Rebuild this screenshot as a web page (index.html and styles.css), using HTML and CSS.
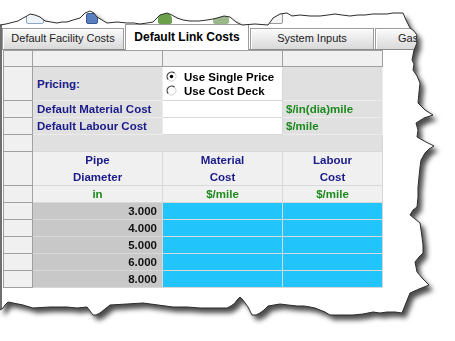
FILE: index.html
```html
<!DOCTYPE html>
<html lang="en">
<head>
    <meta charset="UTF-8">
    <title>Default Link Costs</title>
    <link rel="stylesheet" href="styles.css">
</head>
<body>
    <div class="stage">
        <div class="paper">
            <div class="sheet">
                <div class="toolbar">
                    <span class="ico doc"></span>
                    <span class="ico save"></span>
                    <span class="ico leaf"></span>
                    <span class="ico leaf2"></span>
                    <span class="ico outline"></span>
                </div>
                <div class="window">
                    <div class="tabs">
                        <div class="tab first">Default Facility Costs</div>
                        <div class="tab active">Default Link Costs</div>
                        <div class="tab">System Inputs</div>
                        <div class="tab last">Gas</div>
                    </div>
                    <div class="panel">
                        <div class="grid">
                            <div class="row h16">
                                <div class="rh"></div>
                                <div class="c c1 ch"></div>
                                <div class="c c2 ch"></div>
                                <div class="c c3 ch"></div>
                            </div>
                            <div class="row h34">
                                <div class="rh"></div>
                                <div class="c c1 lbl">Pricing:</div>
                                <div class="c c2 input radios">
                                    <label class="radio">
                                        <svg width="11" height="11" viewBox="0 0 11 11"><circle cx="5.5" cy="5.5" r="4.5" fill="#fff"/><path d="M2.32 8.68A4.5 4.5 0 0 1 8.68 2.32" stroke="#3a3a3a" stroke-width="1.2" fill="none"/><path d="M8.68 2.32A4.5 4.5 0 0 1 2.32 8.68" stroke="#d0d0d0" fill="none"/><circle cx="5.5" cy="5.5" r="1.8" fill="#000"/></svg>
                                        Use Single Price
                                    </label>
                                    <label class="radio">
                                        <svg width="11" height="11" viewBox="0 0 11 11"><circle cx="5.5" cy="5.5" r="4.5" fill="#fff"/><path d="M2.32 8.68A4.5 4.5 0 0 1 8.68 2.32" stroke="#3a3a3a" stroke-width="1.2" fill="none"/><path d="M8.68 2.32A4.5 4.5 0 0 1 2.32 8.68" stroke="#d0d0d0" fill="none"/></svg>
                                        Use Cost Deck
                                    </label>
                                </div>
                                <div class="c c3 unit"></div>
                            </div>
                            <div class="row h17">
                                <div class="rh"></div>
                                <div class="c c1 lbl">Default Material Cost</div>
                                <div class="c c2 input"></div>
                                <div class="c c3 unit">$/in(dia)mile</div>
                            </div>
                            <div class="row h17">
                                <div class="rh"></div>
                                <div class="c c1 lbl">Default Labour Cost</div>
                                <div class="c c2 input"></div>
                                <div class="c c3 unit">$/mile</div>
                            </div>
                            <div class="row h17">
                                <div class="rh"></div>
                                <div class="c span"></div>
                            </div>
                            <div class="row h34">
                                <div class="rh"></div>
                                <div class="c c1 hd"><span>Pipe</span><span>Diameter</span></div>
                                <div class="c c2 hd"><span>Material</span><span>Cost</span></div>
                                <div class="c c3 hd"><span>Labour</span><span>Cost</span></div>
                            </div>
                            <div class="row h17">
                                <div class="rh"></div>
                                <div class="c c1 un">in</div>
                                <div class="c c2 un">$/mile</div>
                                <div class="c c3 un">$/mile</div>
                            </div>
                            <div class="row h17">
                                <div class="rh"></div>
                                <div class="c c1 num">3.000</div>
                                <div class="c c2 cy"></div>
                                <div class="c c3 cy"></div>
                            </div>
                            <div class="row h17">
                                <div class="rh"></div>
                                <div class="c c1 num">4.000</div>
                                <div class="c c2 cy"></div>
                                <div class="c c3 cy"></div>
                            </div>
                            <div class="row h17">
                                <div class="rh"></div>
                                <div class="c c1 num">5.000</div>
                                <div class="c c2 cy"></div>
                                <div class="c c3 cy"></div>
                            </div>
                            <div class="row h17">
                                <div class="rh"></div>
                                <div class="c c1 num">6.000</div>
                                <div class="c c2 cy"></div>
                                <div class="c c3 cy"></div>
                            </div>
                            <div class="row h17">
                                <div class="rh"></div>
                                <div class="c c1 num">8.000</div>
                                <div class="c c2 cy"></div>
                                <div class="c c3 cy"></div>
                            </div>
                        </div>
                    </div>
                </div>
            </div>
        </div>
        <!-- torn paper outline -->
        <svg class="edge" width="455" height="341" viewBox="0 0 455 341">
            <polyline fill="none" stroke="#2b2b2b" stroke-width="1" points="0,25 6,24 10,23 14,22 18,21 23,18 27,16 30,14 35,15 40,17 45,21 51,22 57,23 62,22 67,22 73,20 80,18 83,15 85,13 90,11 94,13 97,17 102,20 107,23 117,22 127,23 134,23 140,24 147,23 153,22 157,18 160,15 167,13 172,15 177,18 183,20 190,21 199,21 207,20 213,19 217,18 224,16 230,17 236,22 242,25 255,24 268,25 271,21 273,18 280,14 287,13 292,16 300,15 310,16 320,16 328,15 335,14 342,15 350,16 358,15 365,15 373,14 380,14 387,14 393,13 403,13 406,20 410,28 414,31 417,35 416,40 417,43 414,50 412,60 414,64 413,70 417,76 420,83 419,92 418,103 425,110 433,115 424,118 416,123 418,130 417,137 426,142 434,146 429,149 425,153 421,160 420,167 419,177 418,187 418,197 417,207 413,210 410,215 415,219 420,223 421,230 422,237 423,245 423,253 419,257 415,262 416,267 417,272 423,279 429,285 419,289 410,293 406,303 402,313 395,312 387,312 380,313 373,312 363,314 353,315 342,315 330,315 325,312 320,310 315,308 310,307 304,306 297,306 288,305 280,304 274,305 268,306 264,310 260,313 256,315 252,315 248,307 243,300 240,297 237,300 235,303 231,306 227,308 213,308 200,308 187,307 173,307 158,305 143,303 127,304 110,305 105,309 100,313 96,315 93,315 90,311 87,307 77,308 67,307 50,307 33,308 23,305 13,303 8,302 5,305 3,308 0,310"/>
        </svg>
    </div>
</body>
</html>
```

FILE: styles.css
```css
* { margin: 0; padding: 0; box-sizing: border-box; }
body { background: #fff; font-family: "Liberation Sans", Arial, sans-serif; overflow: hidden; }

.stage { position: relative; width: 455px; height: 341px; }
.paper { filter: drop-shadow(4px 5px 2.5px rgba(0, 0, 0, 0.7)); }
.sheet {
    width: 455px; height: 341px; background: #fff; padding-top: 10px;
    clip-path: polygon(0 25px, 6px 24px, 10px 23px, 14px 22px, 18px 21px, 23px 18px, 27px 16px, 30px 14px, 35px 15px, 40px 17px, 45px 21px, 51px 22px, 57px 23px, 62px 22px, 67px 22px, 73px 20px, 80px 18px, 83px 15px, 85px 13px, 90px 11px, 94px 13px, 97px 17px, 102px 20px, 107px 23px, 117px 22px, 127px 23px, 134px 23px, 140px 24px, 147px 23px, 153px 22px, 157px 18px, 160px 15px, 167px 13px, 172px 15px, 177px 18px, 183px 20px, 190px 21px, 199px 21px, 207px 20px, 213px 19px, 217px 18px, 224px 16px, 230px 17px, 236px 22px, 242px 25px, 255px 24px, 268px 25px, 271px 21px, 273px 18px, 280px 14px, 287px 13px, 292px 16px, 300px 15px, 310px 16px, 320px 16px, 328px 15px, 335px 14px, 342px 15px, 350px 16px, 358px 15px, 365px 15px, 373px 14px, 380px 14px, 387px 14px, 393px 13px, 403px 13px, 406px 20px, 410px 28px, 414px 31px, 417px 35px, 416px 40px, 417px 43px, 414px 50px, 412px 60px, 414px 64px, 413px 70px, 417px 76px, 420px 83px, 419px 92px, 418px 103px, 425px 110px, 433px 115px, 424px 118px, 416px 123px, 418px 130px, 417px 137px, 426px 142px, 434px 146px, 429px 149px, 425px 153px, 421px 160px, 420px 167px, 419px 177px, 418px 187px, 418px 197px, 417px 207px, 413px 210px, 410px 215px, 415px 219px, 420px 223px, 421px 230px, 422px 237px, 423px 245px, 423px 253px, 419px 257px, 415px 262px, 416px 267px, 417px 272px, 423px 279px, 429px 285px, 419px 289px, 410px 293px, 406px 303px, 402px 313px, 395px 312px, 387px 312px, 380px 313px, 373px 312px, 363px 314px, 353px 315px, 342px 315px, 330px 315px, 325px 312px, 320px 310px, 315px 308px, 310px 307px, 304px 306px, 297px 306px, 288px 305px, 280px 304px, 274px 305px, 268px 306px, 264px 310px, 260px 313px, 256px 315px, 252px 315px, 248px 307px, 243px 300px, 240px 297px, 237px 300px, 235px 303px, 231px 306px, 227px 308px, 213px 308px, 200px 308px, 187px 307px, 173px 307px, 158px 305px, 143px 303px, 127px 304px, 110px 305px, 105px 309px, 100px 313px, 96px 315px, 93px 315px, 90px 311px, 87px 307px, 77px 308px, 67px 307px, 50px 307px, 33px 308px, 23px 305px, 13px 303px, 8px 302px, 5px 305px, 3px 308px, 0 310px);
}
.edge { position: absolute; top: 0; left: 0; }

/* tops of toolbar icons peeking above the tear */
.toolbar { display: flex; align-items: flex-end; height: 14px; }
.ico { display: block; height: 11px; border-radius: 2px; }
.doc { width: 18px; margin-left: 26px; border: 1px solid #8fa6c4; background: #eef3fa; }
.save { width: 12px; margin-left: 42px; background: #5a7fc0; border: 1px solid #3b5a94; }
.leaf { width: 14px; margin-left: 60px; background: #6aa04a; border-radius: 6px 6px 2px 2px; }
.leaf2 { width: 16px; margin-left: 41px; background: #9ab88a; border-radius: 6px 6px 2px 2px; }
.outline { width: 16px; margin-left: 38px; border: 1px solid #9a9a9a; background: #f4f4f4; }

.window { border-left: 2px solid #6f6f6f; height: 300px; }

.tabs { display: flex; align-items: flex-end; height: 26px; border-bottom: 1px solid #8c8c8c; }
.tab { width: 124px; height: 21px; margin-right: 1px; flex-shrink: 0; border: 1px solid #9c9c9c; border-bottom: none; background: linear-gradient(#fbfbfb, #d9d9d9); box-shadow: inset 1px 1px 0 #fff; font-size: 11px; line-height: 19px; color: #222; text-align: center; white-space: nowrap; }
.tab.first { width: 122px; }
.tab.last { width: 60px; margin-right: 0; text-align: left; padding-left: 22px; }
.tab.active { height: 26px; margin-bottom: -1px; background: #fff; box-shadow: none; font-size: 12px; font-weight: bold; line-height: 25px; color: #000; }

.panel { padding-left: 1px; background: #fff; }
.grid { border-top: 1px solid #a0a0a0; width: 380px; }
.row { display: flex; }
.h16 { height: 16px; }
.h17 { height: 17px; }
.h34 { height: 34px; }

.rh { width: 30px; background: #f0f0f0; border-left: 1px solid #a0a0a0; border-right: 1px solid #a0a0a0; border-bottom: 1px solid #a0a0a0; }
.c { border-right: 1px solid #d8d8d8; border-bottom: 1px solid #d8d8d8; font-size: 11.5px; font-weight: bold; display: flex; align-items: center; white-space: nowrap; }
.c1 { width: 130px; }
.c2 { width: 120px; }
.c3 { width: 100px; }

.ch { background: #f0f0f0; border-color: #a0a0a0; }
.lbl { background: #e0e0e0; color: #1a1a8a; padding-left: 4px; border-color: #ececec; }
.input { background: #fff; }
.unit { background: #e0e0e0; color: #1d8a1d; padding-left: 3px; border-color: #ececec; }
.span { width: 350px; background: #e0e0e0; }

.radios { flex-direction: column; align-items: flex-start; justify-content: center; padding-left: 3px; }
.radio { display: flex; align-items: center; gap: 7px; height: 14px; color: #000; }
.radio svg { display: block; }

.hd { background: #f0f0f0; color: #1a1a8a; flex-direction: column; justify-content: center; line-height: 17px; }
.un { background: #f0f0f0; color: #1d8a1d; justify-content: center; }
.num { background: #c8c8c8; color: #111; justify-content: flex-end; padding-right: 5px; }
.cy { background: #22c4fc; }
```
